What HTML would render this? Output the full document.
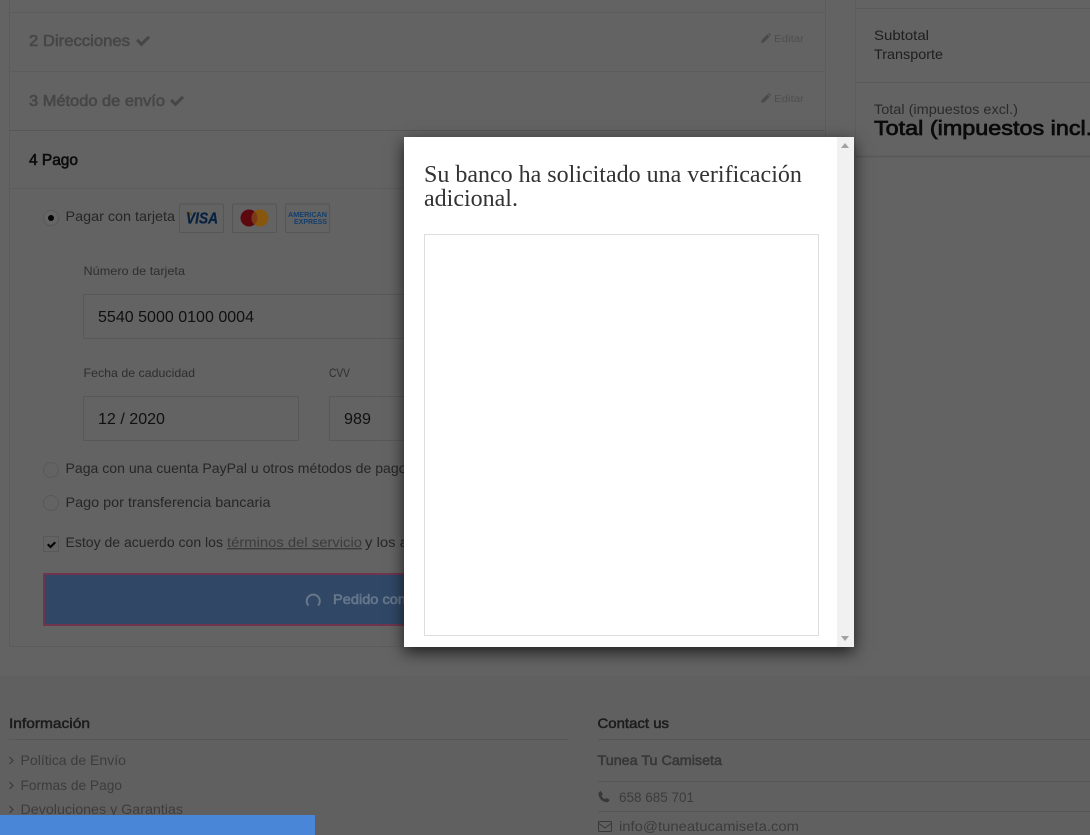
<!DOCTYPE html>
<html lang="es">
<head>
<meta charset="utf-8">
<title>Pago</title>
<style>
html,body{margin:0;padding:0;width:1090px;height:835px;overflow:hidden;background:#636363;}
svg{position:absolute;left:0;top:0;display:block;}
svg text{font-family:"Liberation Sans",sans-serif;white-space:pre;}
.modal{position:absolute;left:404px;top:137px;width:450px;height:510px;background:#fff;box-shadow:0 5px 15px rgba(0,0,0,.7);overflow:hidden;}
.modal h3{position:absolute;left:20px;top:26px;width:400px;margin:0;font:400 24px/24px "Liberation Serif",serif;color:#333;}
.frame{position:absolute;left:20px;top:97px;width:393px;height:400px;border:1px solid #ddd;}
.bar{position:absolute;left:433px;top:0;width:17px;height:510px;background:#f1f1f1;}
.up{position:absolute;left:4px;top:6px;width:0;height:0;border-left:4px solid transparent;border-right:4px solid transparent;border-bottom:5px solid #a3a3a3;}
.down{position:absolute;left:4px;bottom:6px;width:0;height:0;border-left:4px solid transparent;border-right:4px solid transparent;border-top:5px solid #a3a3a3;}
</style>
</head>
<body>
<svg width="1090" height="835" viewBox="0 0 1090 835" xmlns="http://www.w3.org/2000/svg">
  <rect width="1090" height="835" fill="#636363"/>
  <rect y="676" width="1090" height="159" fill="#606060"/>

  <!-- main column frame -->
  <g fill="none" stroke="#5c5c5c">
    <path d="M9.500 0V646.500H825.500V0"/>
    <path d="M10 12.500H825"/>
    <path d="M10 71.500H825"/>
    <path d="M10 130.500H825" stroke="#575757"/>
    <path d="M10 188.500H825"/>
  </g>

  <!-- step headers -->
  <g font-size="16" fill="#464646" stroke="#464646" stroke-width=".6">
    <text x="29" y="46" textLength="101" lengthAdjust="spacingAndGlyphs">2 Direcciones</text>
    <text x="29" y="106" textLength="136" lengthAdjust="spacingAndGlyphs">3 Método de envío</text>
  </g>
  <text x="29" y="165" font-size="16" fill="#0c0c0c" stroke="#0c0c0c" stroke-width=".6" textLength="49" lengthAdjust="spacingAndGlyphs">4 Pago</text>
  <path d="M136 41l2.200-2.200 3.300 3.300 6.400-6.400 2.200 2.200-8.600 8.600z" fill="#464646"/>
  <path d="M170 101l2.200-2.200 3.300 3.300 6.400-6.400 2.200 2.200-8.600 8.600z" fill="#464646"/>

  <!-- edit links -->
  <g font-size="10.500" fill="#4e4e4e">
    <text x="774" y="42" textLength="30" lengthAdjust="spacingAndGlyphs">Editar</text>
    <text x="774" y="102" textLength="30" lengthAdjust="spacingAndGlyphs">Editar</text>
  </g>
  <path d="M761 43l.8-3 5.500-5.500 2.300 2.300-5.500 5.500zM768 33.800l1-.8 2 2-.8 1z" fill="#4a4a4a"/>
  <path d="M761 103l.8-3 5.500-5.500 2.300 2.300-5.500 5.500zM768 93.800l1-.8 2 2-.8 1z" fill="#4a4a4a"/>

  <!-- payment option 1 -->
  <circle cx="51" cy="218" r="7.500" fill="#666" stroke="#595959"/>
  <circle cx="51" cy="218" r="3" fill="#050505"/>
  <text x="65.500" y="221" font-size="14" fill="#262626" textLength="109.500" lengthAdjust="spacingAndGlyphs">Pagar con tarjeta</text>
  <g fill="none" stroke="#565656">
    <rect x="179.500" y="204" width="44" height="28.500" rx="1.500"/>
    <rect x="232.500" y="204" width="44" height="28.500" rx="1.500"/>
    <rect x="285.500" y="204" width="44" height="28.500" rx="1.500"/>
  </g>
  <path d="M184 211.500l7 .5 2 6c-1.500-3-5-5.500-9-6.500z" fill="#6e5220"/>
  <text x="186" y="223.500" font-size="16" font-weight="700" font-style="italic" fill="#07213f" stroke="#07213f" stroke-width=".3" textLength="32" lengthAdjust="spacingAndGlyphs">VISA</text>
  <circle cx="249" cy="218" r="8.500" fill="#5c080e"/>
  <circle cx="260" cy="218" r="8.500" fill="#86570c"/>
  <path d="M254.500 211.500a8.500 8.500 0 0 1 0 13a8.500 8.500 0 0 1 0-13z" fill="#7e3a16"/>
  <g font-size="7.500" font-weight="700" fill="#123f70">
    <text x="288" y="217" textLength="39" lengthAdjust="spacingAndGlyphs">AMERICAN</text>
    <text x="294" y="224" textLength="33" lengthAdjust="spacingAndGlyphs">EXPRESS</text>
  </g>

  <!-- card fields -->
  <g font-size="12" fill="#2e2e2e">
    <text x="83.500" y="275" textLength="101.500" lengthAdjust="spacingAndGlyphs">Número de tarjeta</text>
    <text x="83.500" y="377" textLength="111.500" lengthAdjust="spacingAndGlyphs">Fecha de caducidad</text>
    <text x="329" y="377" textLength="21" lengthAdjust="spacingAndGlyphs">CVV</text>
  </g>
  <g fill="none" stroke="#585858">
    <rect x="83.500" y="294.500" width="340" height="44"/>
    <rect x="83.500" y="396.500" width="215" height="44"/>
    <rect x="329.500" y="396.500" width="94" height="44"/>
  </g>
  <g font-size="16" fill="#101010">
    <text x="98" y="322" textLength="156" lengthAdjust="spacingAndGlyphs">5540 5000 0100 0004</text>
    <text x="98" y="424" textLength="67" lengthAdjust="spacingAndGlyphs">12 / 2020</text>
    <text x="344" y="424" textLength="27" lengthAdjust="spacingAndGlyphs">989</text>
  </g>

  <!-- other options -->
  <circle cx="51" cy="470" r="7.500" fill="none" stroke="#595959"/>
  <circle cx="51" cy="503" r="7.500" fill="none" stroke="#595959"/>
  <g font-size="14" fill="#262626">
    <text x="65.500" y="473" textLength="341" lengthAdjust="spacingAndGlyphs">Paga con una cuenta PayPal u otros métodos de pago</text>
    <text x="65.500" y="507" textLength="205" lengthAdjust="spacingAndGlyphs">Pago por transferencia bancaria</text>
    <text x="65.500" y="547" textLength="157.500" lengthAdjust="spacingAndGlyphs">Estoy de acuerdo con los</text>
    <text x="227" y="547" textLength="135" lengthAdjust="spacingAndGlyphs" fill="#3c3c3c" text-decoration="underline">términos del servicio</text>
    <text x="365" y="547" textLength="43" lengthAdjust="spacingAndGlyphs">y los a</text>
  </g>
  <rect x="43.500" y="536.500" width="15" height="15" fill="none" stroke="#585858"/>
  <path d="M47 545l1.500-1.500 2 2 4-4 1.500 1.500-5.500 5.500z" fill="#050505"/>

  <!-- submit button -->
  <rect x="44" y="574" width="380" height="51" fill="#304866" stroke="#70344f" stroke-width="2"/>
  <path d="M308.500 605.500a6.500 6.500 0 1 1 9.500 0" fill="none" stroke="#67778b" stroke-width="2"/>
  <text x="333" y="604" font-size="14" fill="#67778b" stroke="#67778b" stroke-width=".6" textLength="73" lengthAdjust="spacingAndGlyphs">Pedido con</text>

  <!-- sidebar -->
  <path d="M855.500 0V157" stroke="#5c5c5c" fill="none"/>
  <path d="M856 8.500H1090M856 82.500H1090" stroke="#5a5a5a" fill="none"/>
  <path d="M856 156.500H1090" stroke="#5a5a5a" stroke-width="2" fill="none"/>
  <g font-size="14" fill="#1e1e1e">
    <text x="874" y="40" textLength="55" lengthAdjust="spacingAndGlyphs">Subtotal</text>
    <text x="874" y="59" textLength="69" lengthAdjust="spacingAndGlyphs">Transporte</text>
    <text x="874" y="114" textLength="144" lengthAdjust="spacingAndGlyphs" fill="#2a2a2a">Total (impuestos excl.)</text>
  </g>
  <text x="874" y="135" font-size="20" fill="#0a0a0a" stroke="#0a0a0a" stroke-width=".7" textLength="226" lengthAdjust="spacingAndGlyphs">Total (impuestos incl.)</text>

  <!-- footer -->
  <g font-size="14" fill="#1c1c1c" stroke="#1c1c1c" stroke-width=".5">
    <text x="9" y="728" textLength="81" lengthAdjust="spacingAndGlyphs">Información</text>
    <text x="597.500" y="728" textLength="71.500" lengthAdjust="spacingAndGlyphs">Contact us</text>
  </g>
  <path d="M9 739.500H568M598 739.500H1090M598 781.500H1090M598 811.500H1090" stroke="#565656" fill="none"/>
  <g fill="none" stroke="#363636" stroke-width="1">
    <path d="M9.500 757l3.500 3.500-3.500 3.500"/>
    <path d="M9.500 782l3.500 3.500-3.500 3.500"/>
    <path d="M9.500 806l3.500 3.500-3.500 3.500"/>
  </g>
  <g font-size="14" fill="#3c3c3c">
    <text x="20.500" y="765" textLength="105.500" lengthAdjust="spacingAndGlyphs">Política de Envío</text>
    <text x="20.500" y="790" textLength="101.500" lengthAdjust="spacingAndGlyphs">Formas de Pago</text>
    <text x="20.500" y="814" textLength="162.500" lengthAdjust="spacingAndGlyphs">Devoluciones y Garantias</text>
    <text x="619" y="802" textLength="75" lengthAdjust="spacingAndGlyphs">658 685 701</text>
    <text x="619" y="831" textLength="180" lengthAdjust="spacingAndGlyphs">info@tuneatucamiseta.com</text>
  </g>
  <text x="597.500" y="765" font-size="14" fill="#383838" stroke="#383838" stroke-width=".6" textLength="124.500" lengthAdjust="spacingAndGlyphs">Tunea Tu Camiseta</text>
  <path d="M598.500 793.500c0-1 1-2 2.300-2.500l2 3.300-1.300 1.400c.6 1.500 2 2.900 3.500 3.500l1.400-1.300 3.300 2c-.5 1.300-1.500 2.300-2.500 2.300-4.800 0-8.700-3.900-8.700-8.700z" fill="#383838"/>
  <rect x="598.500" y="821.500" width="13" height="10" rx="1" fill="none" stroke="#383838"/>
  <path d="M599 823.500l6 4.500 6-4.500" fill="none" stroke="#383838"/>

  <!-- bottom bar -->
  <rect x="0" y="815" width="315" height="20" fill="#4a86d8"/>
</svg>

<div class="modal">
  <h3>Su banco ha solicitado una verificación adicional.</h3>
  <div class="frame"></div>
  <div class="bar"><div class="up"></div><div class="down"></div></div>
</div>
</body>
</html>
